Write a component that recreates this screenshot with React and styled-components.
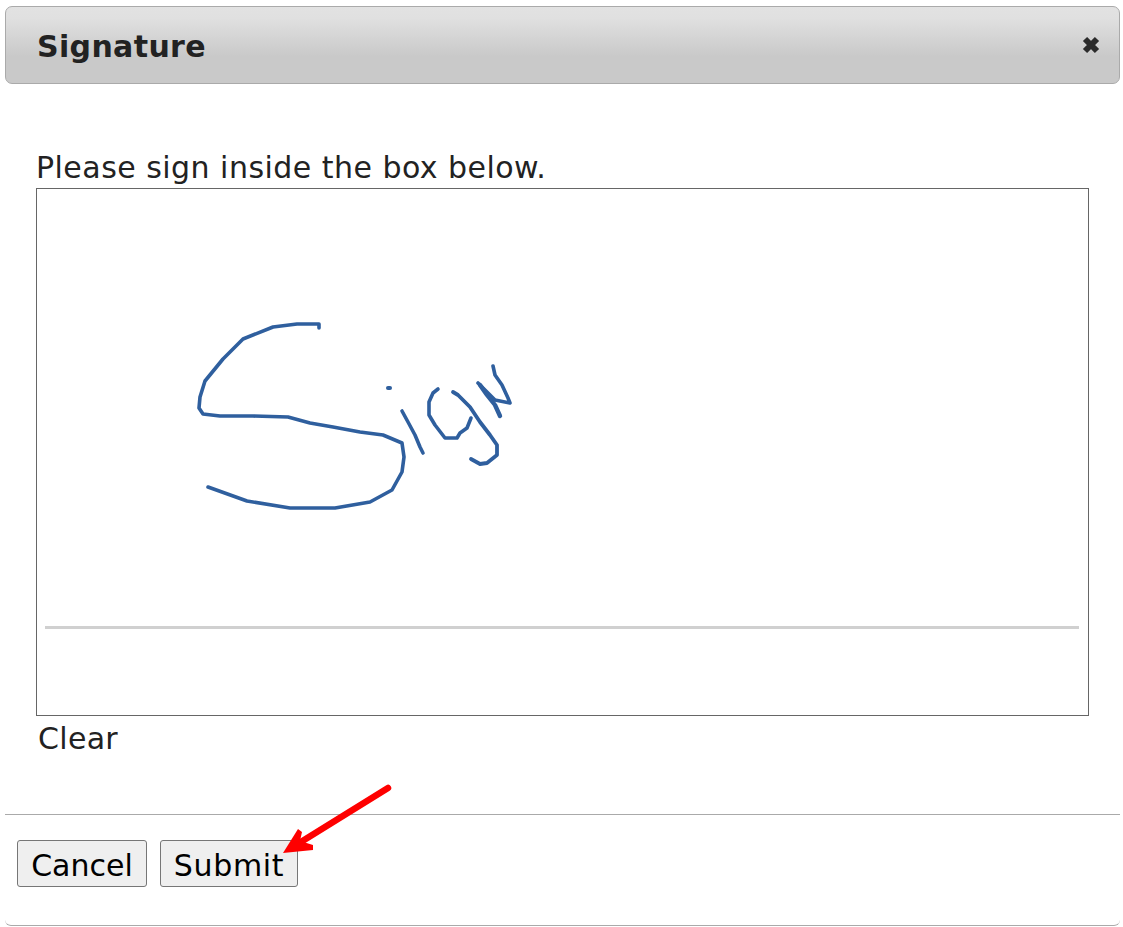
import React from 'react'
import styled, { createGlobalStyle } from 'styled-components'

const GlobalStyle = createGlobalStyle`
  html, body {
    margin: 0;
    padding: 0;
    background: #fff;
  }
  body {
    font-family: "DejaVu Sans", Verdana, sans-serif;
    color: #222;
  }
`

const Page = styled.div`
  position: relative;
  width: 1123px;
  height: 927px;
  overflow: hidden;
  padding: 6px 3px 0 5px;
  box-sizing: border-box;
  background: #fff;
`

const Modal = styled.div`
  display: flex;
  flex-direction: column;
  height: 920px;
  box-sizing: border-box;
  border-bottom: 1px solid #aaa;
  border-radius: 0 0 6px 6px;
`

const Header = styled.div`
  display: flex;
  align-items: center;
  justify-content: space-between;
  height: 78px;
  box-sizing: border-box;
  padding: 0 18px 0 31px;
  background: linear-gradient(to bottom, #e2e2e2 0%, #e0e0e0 15%, #c9c9c9 65%, #c9c9c9 100%);
  border: 1px solid #aaa;
  border-radius: 7px;
`

const Title = styled.div`
  padding-top: 2px;
  font-size: 30px;
  font-weight: 700;
  letter-spacing: 0.35px;
  color: #222;
`

const CloseIcon = styled.svg`
  width: 20px;
  height: 20px;
  color: #2b2b2b;
`

const Body = styled.div`
  display: flex;
  flex-direction: column;
  align-items: flex-start;
  padding: 64px 31px 0;
  height: 730px;
  box-sizing: border-box;
`

const Prompt = styled.div`
  font-size: 30px;
  line-height: 40px;
  letter-spacing: 0.47px;
  color: #222;
`

const SignatureBox = styled.div`
  width: 1053px;
  height: 528px;
  box-sizing: border-box;
  border: 1px solid #666;
  background: #fff;
`

const SignatureArt = styled.svg`
  display: block;
  width: 100%;
  height: 100%;
`

const ClearLink = styled.div`
  font-size: 30px;
  line-height: 46px;
  letter-spacing: 0.3px;
  padding-left: 2px;
  color: #222;
`

const Footer = styled.div`
  display: flex;
  gap: 13px;
  padding: 25px 12px 0;
  border-top: 1px solid #aaa;
`

const Button = styled.button`
  height: 47px;
  width: ${(p) => p.$width}px;
  padding: 3px 0 0;
  font-family: inherit;
  font-size: 30px;
  letter-spacing: ${(p) => p.$spacing}px;
  color: #000;
  background: #efefef;
  border: 1px solid #767676;
  border-radius: 3px;
`

const ArrowOverlay = styled.svg`
  position: absolute;
  left: 270px;
  top: 775px;
  width: 130px;
  height: 90px;
`

const strokes = [
  { d: 'M319 328L319 324L297 324L273 327L243 339L223 359L205 381L200 397L199 408L203 414L220 416L253 416L288 417L310 423L333 427L360 432L383 435L402 443L404 457L402 472L392 490L370 502L335 508L290 508L247 501L208 487', w: 3.6 },
  { d: 'M388 388L390 388', w: 4 },
  { d: 'M402 411L408 422L415 435L420 447L423 453', w: 3.6 },
  { d: 'M438 389L433 393L429 402L429 415L435 425L445 438L457 438L460 433L467 428L471 418', w: 3.6 },
  { d: 'M453 392L458 395L470 407L480 422L490 435L497 445L497 455L487 463L480 464L471 459', w: 3.8 },
  { d: 'M480 385L487 395L495 405L500 416', w: 4.4 },
  { d: 'M493 366L495 375L502 385L508 398L510 403L495 400L487 392L478 383', w: 3.6 },
]

const App = () => {
  return (
    <Page>
      <GlobalStyle />
      <Modal>
        <Header>
          <Title>Signature</Title>
          <CloseIcon viewBox="0 0 20 20">
            <path d="M4 4L16 16M16 4L4 16" stroke="currentColor" strokeWidth="6" />
          </CloseIcon>
        </Header>
        <Body>
          <Prompt>Please sign inside the box below.</Prompt>
          <SignatureBox>
            <SignatureArt viewBox="37 189 1051 526">
              <line x1="45" y1="627.5" x2="1079" y2="627.5" stroke="#d0d0d0" strokeWidth="3" />
              {strokes.map(({ d, w }) => (
                <path
                  key={d}
                  d={d}
                  fill="none"
                  stroke="#2f5f9e"
                  strokeWidth={w}
                  strokeLinecap="round"
                  strokeLinejoin="round"
                />
              ))}
            </SignatureArt>
          </SignatureBox>
          <ClearLink>Clear</ClearLink>
        </Body>
        <Footer>
          <Button $width={130} $spacing={0}>Cancel</Button>
          <Button $width={138} $spacing={0.7}>Submit</Button>
        </Footer>
      </Modal>
      <ArrowOverlay viewBox="270 775 130 90">
        <line x1="388" y1="788" x2="296" y2="845" stroke="#fe0000" strokeWidth="6.5" strokeLinecap="round" />
        <polygon points="283,853 298,829 302,832 300,841 313,845 313,850" fill="#fe0000" />
      </ArrowOverlay>
    </Page>
  )
}

export default App
